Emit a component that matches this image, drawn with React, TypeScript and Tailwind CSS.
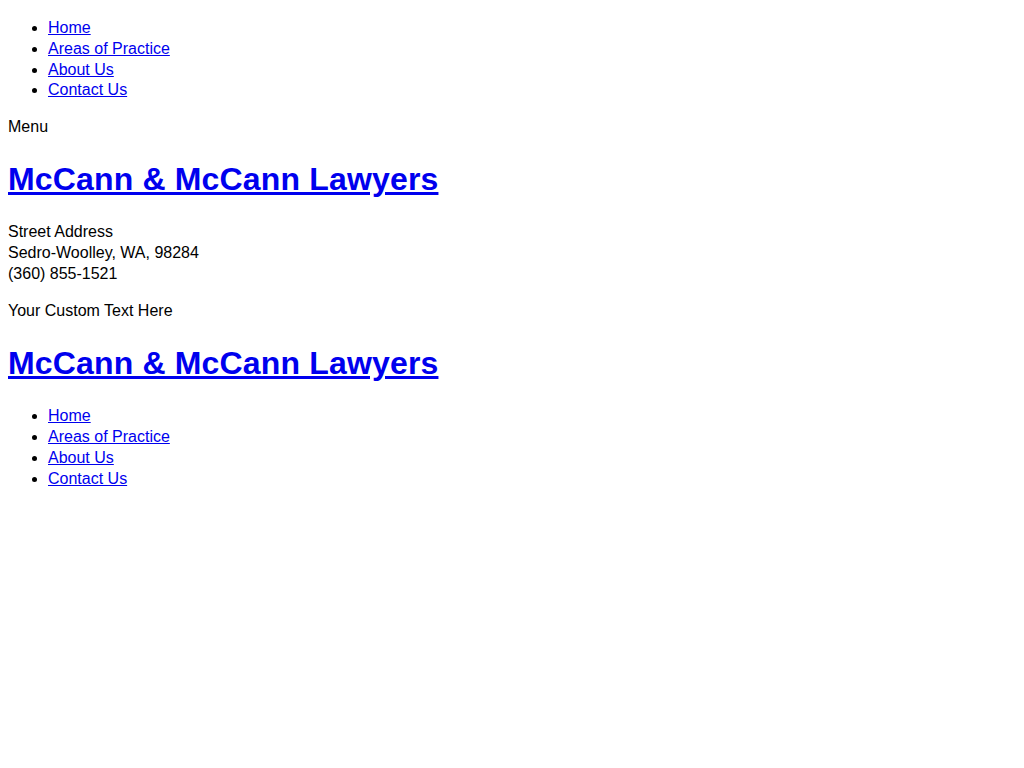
import React from 'react';

const links = ['Home', 'Areas of Practice', 'About Us', 'Contact Us'];

function NavList({ top }: { top?: boolean }) {
  return (
    <ul className={top ? 'mt-[18px] mb-4 list-disc pl-10' : 'my-4 list-disc pl-10'}>
      {links.map((label) => (
        <li key={label}>
          <a href="#" className="text-[#0000ee] underline">
            {label}
          </a>
        </li>
      ))}
    </ul>
  );
}

function SiteTitle() {
  return (
    <h1 className="my-[0.67em] text-[32px] font-bold tracking-[0.16px]">
      <a href="#" className="text-[#0000ee] underline">
        McCann &amp; McCann Lawyers
      </a>
    </h1>
  );
}

export default function App() {
  return (
    <div className="bg-white px-2 text-[16px] leading-[1.3] text-black [font-family:'Liberation_Sans',Arial,sans-serif]">
      {/* top nav */}
      <NavList top />
      <p className="my-4">Menu</p>

      {/* header */}
      <SiteTitle />
      <p className="my-4">
        Street Address
        <br />
        Sedro-Woolley, WA, 98284
        <br />
        (360) 855-1521
      </p>
      <p className="my-4">Your Custom Text Here</p>

      {/* footer */}
      <SiteTitle />
      <NavList />
    </div>
  );
}
